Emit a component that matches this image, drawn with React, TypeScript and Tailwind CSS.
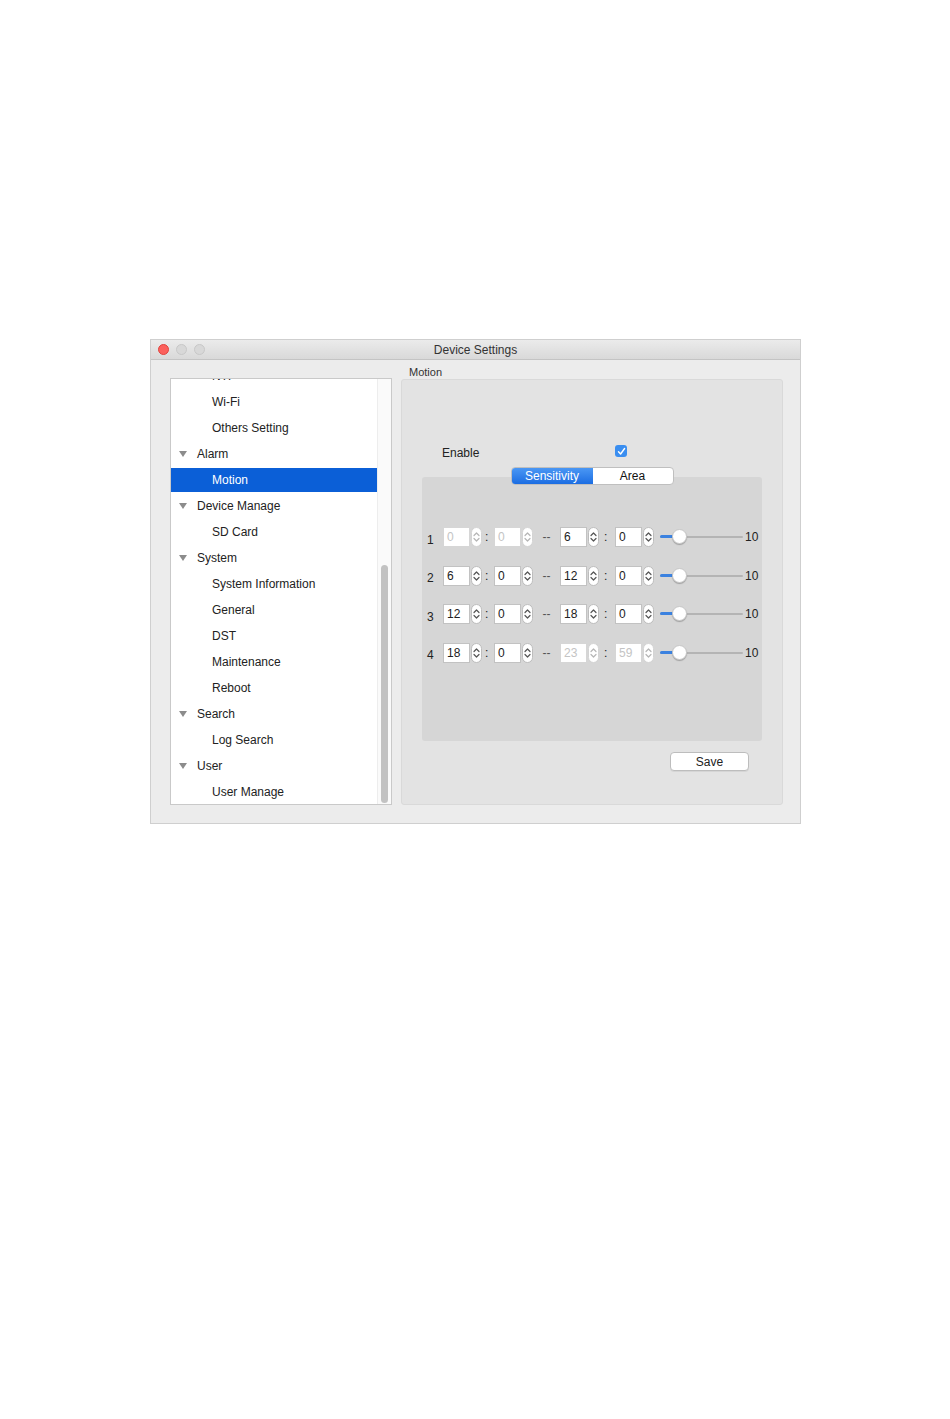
import React from 'react';

const tree = [
  { label: 'NTP', level: 1 },
  { label: 'Wi-Fi', level: 1 },
  { label: 'Others Setting', level: 1 },
  { label: 'Alarm', level: 0 },
  { label: 'Motion', level: 1, selected: true },
  { label: 'Device Manage', level: 0 },
  { label: 'SD Card', level: 1 },
  { label: 'System', level: 0 },
  { label: 'System Information', level: 1 },
  { label: 'General', level: 1 },
  { label: 'DST', level: 1 },
  { label: 'Maintenance', level: 1 },
  { label: 'Reboot', level: 1 },
  { label: 'Search', level: 0 },
  { label: 'Log Search', level: 1 },
  { label: 'User', level: 0 },
  { label: 'User Manage', level: 1 },
];

const schedule = [
  { n: 1, values: ['0', '0', '6', '0'], disabled: [true, true, false, false] },
  { n: 2, values: ['6', '0', '12', '0'], disabled: [false, false, false, false] },
  { n: 3, values: ['12', '0', '18', '0'], disabled: [false, false, false, false] },
  { n: 4, values: ['18', '0', '23', '59'], disabled: [false, false, true, true] },
];

const font = { fontFamily: '"Liberation Sans", Arial, sans-serif' };

const Stepper = ({ disabled }: { disabled?: boolean }) => (
  <div
    className={`flex h-[20px] w-[11px] items-center justify-center rounded-[6px] border bg-white ${
      disabled ? 'border-[#d4d4d4]' : 'border-[#bdbdbd]'
    }`}
  >
    <svg width="9" height="14" viewBox="0 0 9 14" fill="none">
      <path
        d="M2 5.5 L4.5 3 L7 5.5 M2 8.5 L4.5 11 L7 8.5"
        stroke={disabled ? '#b5b5b5' : '#555'}
        strokeWidth="1.2"
        strokeLinecap="round"
        strokeLinejoin="round"
      />
    </svg>
  </div>
);

const SpinBox = ({ value, disabled }: { value: string; disabled?: boolean }) => (
  <div className="flex items-center gap-px">
    <div
      className={`flex h-[20px] w-[27px] items-center border bg-white pl-[3px] text-[12px] ${
        disabled ? 'border-[#d6d6d6] text-[#c4c4c4]' : 'border-[#c2c2c2] text-[#222]'
      }`}
    >
      {value}
    </div>
    <Stepper disabled={disabled} />
  </div>
);

const Slider = () => (
  <div className="relative h-[16px] w-[83px]">
    <div className="absolute left-0 right-0 top-[7px] h-[2px] rounded-full bg-[#b4b4b4]" />
    <div className="absolute left-0 top-[6px] h-[3px] w-[14px] rounded-full bg-[#3b82e0]" />
    <div className="absolute left-[12px] top-0 h-[15px] w-[15px] rounded-full border border-[#c8c8c8] bg-white shadow-[0_1px_1px_rgba(0,0,0,0.25)]" />
  </div>
);

export default function App() {
  return (
    <div className="min-h-[1419px] w-[950px] bg-white pt-[339px] pl-[150px] text-[#222]" style={font}>
      <div className="flex h-[485px] w-[651px] flex-col border border-[#cfcfcf] bg-[#ececec]">
        {/* title bar */}
        <div className="relative flex h-[20px] items-center justify-center border-b border-[#c4c4c4] bg-gradient-to-b from-[#ebebeb] to-[#d9d9d9]">
          <div className="absolute left-[7px] top-[4px] flex gap-[7px]">
            <div className="h-[11px] w-[11px] rounded-full border border-[#e0443e] bg-[#fc605c]" />
            <div className="h-[11px] w-[11px] rounded-full border border-[#c8c8c8] bg-[#d8d8d8]" />
            <div className="h-[11px] w-[11px] rounded-full border border-[#c8c8c8] bg-[#d8d8d8]" />
          </div>
          <span className="text-[12px] text-[#333]">Device Settings</span>
        </div>

        <div className="flex pl-[19px]">
          {/* tree */}
          <div className="mt-[18px] flex h-[427px] w-[222px] overflow-hidden border border-[#c9c9c9] bg-white">
            <div className="flex-1 overflow-hidden">
              <div className="-mt-[16px]">
                {tree.map((item) => (
                  <div key={item.label} className="h-[26px] py-px">
                    <div
                      className={`flex h-full items-center text-[12px] ${
                        item.selected ? 'bg-[#0b5fd7] text-white' : 'text-[#222]'
                      } ${item.level === 0 ? 'pl-[7px]' : 'pl-[41px]'}`}
                    >
                      {item.level === 0 && (
                        <svg width="10" height="8" viewBox="0 0 10 8" className="mr-[9px]">
                          <path d="M1 1 L9 1 L5 7 Z" fill="#8c8c8c" />
                        </svg>
                      )}
                      {item.label}
                    </div>
                  </div>
                ))}
              </div>
            </div>
            <div className="flex w-[14px] flex-col border-l border-[#ededed] bg-[#fafafa] px-[3px]">
              <div className="mt-[186px] h-[238px] rounded-full bg-[#c2c2c2]" />
            </div>
          </div>

          {/* right group */}
          <div className="ml-[9px] flex flex-col">
            <div className="mt-[6px] pl-[8px] text-[11px] leading-[13px] text-[#333]">Motion</div>
            <div className="flex h-[426px] w-[382px] flex-col rounded-[3px] border border-[#d9d9d9] bg-[#e3e3e3]">
              <div className="mt-[63px] flex h-[16px] items-center">
                <span className="w-[213px] pl-[40px] pt-[3px] text-[12px]">Enable</span>
                <div className="flex h-[12px] w-[12px] items-center justify-center rounded-[3px] bg-[#3a8ef0]">
                  <svg width="9" height="9" viewBox="0 0 9 9" fill="none">
                    <path d="M1.5 4.8 L3.6 7 L7.6 1.5" stroke="#fff" strokeWidth="1.4" strokeLinecap="round" strokeLinejoin="round" />
                  </svg>
                </div>
              </div>

              <div className="mx-[20px] mt-[8px] flex flex-col items-center">
                <div className="relative z-10 flex h-[18px] w-[163px] overflow-hidden rounded-[4px] border border-[#bfbfbf] bg-white text-[12px]">
                  <div className="flex w-[81px] items-center justify-center bg-gradient-to-b from-[#4a97f4] to-[#1b6de2] text-white">
                    Sensitivity
                  </div>
                  <div className="flex flex-1 items-center justify-center text-[#111]">Area</div>
                </div>
                <div className="-mt-[8px] h-[264px] w-full rounded-[3px] bg-[#d6d6d6] pt-[50px]">
                  <div className="flex flex-col gap-[18.5px]">
                    {schedule.map((row) => (
                      <div key={row.n} className="flex h-[20px] items-center text-[12px]">
                        <span className="w-[21px] pl-[5px] pt-[5px]">{row.n}</span>
                        <SpinBox value={row.values[0]} disabled={row.disabled[0]} />
                        <span className="w-[12px] pl-[3px]">:</span>
                        <SpinBox value={row.values[1]} disabled={row.disabled[1]} />
                        <span className="w-[27px] text-center text-[#555]">--</span>
                        <SpinBox value={row.values[2]} disabled={row.disabled[2]} />
                        <span className="w-[16px] pl-[5px]">:</span>
                        <SpinBox value={row.values[3]} disabled={row.disabled[3]} />
                        <div className="ml-[6px]">
                          <Slider />
                        </div>
                        <span className="ml-[2px]">10</span>
                      </div>
                    ))}
                  </div>
                </div>
              </div>

              <div className="mt-[11px] flex justify-end pr-[33px]">
                <button className="h-[19px] w-[79px] rounded-[4px] border border-[#bdbdbd] bg-white text-[12px] text-[#222] shadow-[0_1px_0_rgba(0,0,0,0.06)]">
                  Save
                </button>
              </div>
            </div>
          </div>
        </div>
      </div>
    </div>
  );
}
